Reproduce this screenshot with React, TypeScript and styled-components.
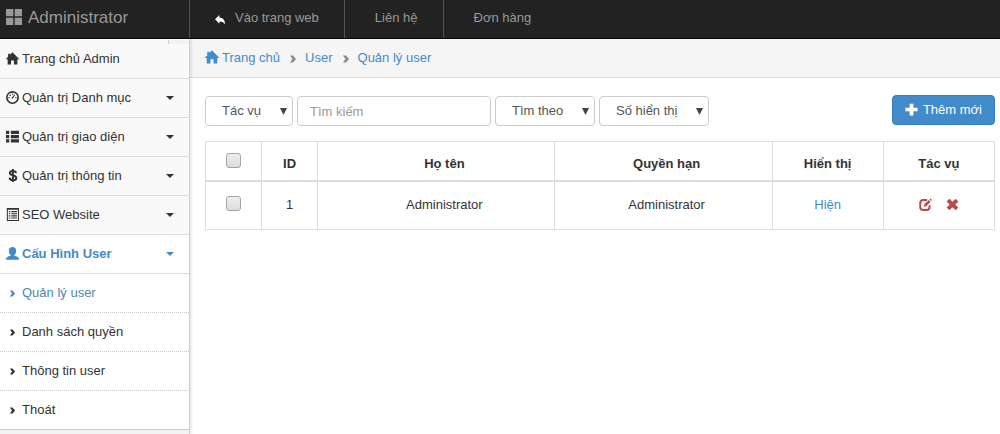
import React from "react";
import styled, { createGlobalStyle, css } from "styled-components";

const GlobalStyle = createGlobalStyle`
  *, *::before, *::after { box-sizing: border-box; }
  body {
    margin: 0;
    background: #fff;
    color: #333;
    font-family: "Liberation Sans", Arial, "Noto Sans", sans-serif;
    font-size: 13px;
    line-height: 20px;
  }
  a { color: inherit; text-decoration: none; }
  ul, ol { margin: 0; padding: 0; list-style: none; }
`;

const Page = styled.div`
  display: flex;
  flex-direction: column;
  min-height: 100vh;
`;

const TopBar = styled.header`
  display: flex;
  height: 39px;
  background: #222;
  border-bottom: 1px solid #080808;
  color: #999;
`;

const Brand = styled.a`
  display: flex;
  align-items: center;
  gap: 6px;
  width: 189px;
  padding-left: 6px;
  padding-bottom: 2px;
  font-size: 17px;
`;

const TopNav = styled.nav`
  display: flex;
`;

const TopLink = styled.a<{ $pad: string }>`
  display: flex;
  align-items: center;
  gap: 10px;
  padding: ${(p) => p.$pad};
  border-left: 1px solid #555;
`;

const ReplyMark = styled.span`
  margin-top: 4px;
  color: #fff;
`;

const Body = styled.div`
  display: flex;
  flex: 1;
`;

const Sidebar = styled.aside`
  position: relative;
  flex: none;
  width: 190px;
  background: #f3f3f3;
  border-top: 1px solid #fff;
  border-right: 1px solid #d0d0d0;
  box-shadow: 1px 0 3px rgba(0, 0, 0, 0.14);

  &::before {
    content: "";
    position: absolute;
    top: 0;
    right: 0;
    width: 21px;
    height: 4px;
    background: #f2f2f2;
    border-left: 1px solid #ccc;
  }
`;

const MenuLink = styled.a<{ $active?: boolean }>`
  display: flex;
  align-items: center;
  gap: 3px;
  height: 39px;
  padding: 0 15px 0 6px;
  background: #f9f9f9;
  border-bottom: 1px solid #ddd;
  ${(p) =>
    p.$active &&
    css`
      background: #fff;
      color: #428bca;
      font-weight: bold;
    `}
`;

const MenuText = styled.span`
  flex: 1;
`;

const Caret = styled.span`
  border-top: 4px solid currentColor;
  border-left: 4px solid transparent;
  border-right: 4px solid transparent;
`;

const SubMenu = styled.ul`
  background: #fff;
  border-bottom: 1px solid #ccc;

  li + li {
    border-top: 1px dotted #ccc;
  }
`;

const SubLink = styled.a<{ $active?: boolean }>`
  display: flex;
  align-items: center;
  gap: 6px;
  height: 38px;
  padding-left: 9px;
  color: ${(p) => (p.$active ? "#4b88b7" : "#333")};
`;

const Main = styled.main`
  flex: 1;
  min-width: 0;
`;

const Breadcrumb = styled.ol`
  display: flex;
  align-items: center;
  height: 39px;
  padding-left: 15px;
  background: #f5f5f5;
  border-bottom: 1px solid #ddd;
  color: #428bca;

  li {
    display: flex;
    align-items: center;
  }
  a {
    display: flex;
    align-items: center;
    gap: 3px;
  }
`;

const Separator = styled.span`
  display: flex;
  margin: 1px 8px 0 9px;
  color: #8c8c8c;
`;

const Content = styled.div`
  padding: 18px 5px 20px 15px;
`;

const Toolbar = styled.form`
  display: flex;
  gap: 4px;
  margin-bottom: 15px;
`;

const field = css`
  height: 30px;
  border: 1px solid #ccc;
  border-radius: 4px;
  background: #fff;
  color: #555;
  font: inherit;
`;

const SelectBox = styled.div<{ $width: number }>`
  position: relative;
  width: ${(p) => p.$width}px;
`;

const Select = styled.select`
  ${field}
  appearance: none;
  width: 100%;
  padding: 0 16px;
`;

const SelectArrow = styled.svg`
  position: absolute;
  top: 12px;
  right: 6px;
  pointer-events: none;
`;

const SearchInput = styled.input`
  ${field}
  width: 194px;
  padding: 0 12px;

  &::placeholder {
    color: #999;
    opacity: 1;
  }
`;

const AddButton = styled.button`
  display: flex;
  align-items: center;
  gap: 5px;
  height: 30px;
  margin: -1px 0 1px auto;
  padding: 0 12px;
  border: 1px solid #357ebd;
  border-radius: 4px;
  background: #428bca;
  color: #fff;
  font: inherit;
`;

const Table = styled.table`
  width: 100%;
  table-layout: fixed;
  border-collapse: collapse;
  text-align: center;

  th, td {
    padding: 0;
    border: 1px solid #ddd;
  }
  th {
    height: 39px;
    padding-top: 6px;
    border-bottom-width: 2px;
  }
  th:first-child {
    padding-top: 0;
  }
  td {
    height: 49px;
  }
  td:first-child {
    padding-bottom: 4px;
  }
  th:nth-child(3), td:nth-child(3) {
    padding-left: 17px;
  }
  th:nth-child(4), td:nth-child(4) {
    padding-left: 7px;
  }
`;

const Checkbox = styled.input`
  appearance: none;
  display: block;
  width: 15px;
  height: 15px;
  margin: 0 auto;
  border: 1px solid #a6a6a6;
  border-radius: 3px;
  background: linear-gradient(#eee, #dcdcdc);

  &:checked {
    background: #428bca;
  }
`;

const StateLink = styled.a`
  color: #428bca;
`;

const Actions = styled.div`
  display: flex;
  justify-content: center;
  gap: 14px;
`;

const IconButton = styled.button`
  display: flex;
  padding: 0;
  border: 0;
  background: none;
  color: #b94a48;
`;

const Svg = styled.svg<{ $raised: boolean }>`
  display: block;
  flex: none;
  margin-bottom: ${(p) => (p.$raised ? "2px" : "0")};
  fill: currentColor;
`;

type IconName =
  | "grid" | "reply" | "home" | "dashboard" | "list" | "dollar"
  | "listAlt" | "user" | "plus" | "edit" | "remove" | "chevron";

const shapes: Record<IconName, React.ReactNode> = {
  grid: <path d="M0 0h7.300v7.300H0zM8.700 0H16v7.300H8.700zM0 8.700h7.300V16H0zM8.700 8.700H16V16H8.700z" />,
  reply: <path d="M0 6.800 7 0v4c5.500.2 9 3.500 9 11-1.800-3.300-4-4.700-9-4.800v3.600z" />,
  home: <path d="M8 .3 16.400 9H14v6.500H9.800v-5H6.200v5H2V9H-.4L2.600 5.900V2h2.400v1.400z" />,
  dashboard: (
    <>
      <path fillRule="evenodd" d="M8 0a8 8 0 1 1 0 16A8 8 0 0 1 8 0zm0 2a6 6 0 1 0 0 12A6 6 0 0 0 8 2z" />
      <path d="m7 8.500 3.500-4.500.8.6-2.800 4.700a1 1 0 0 1-1.500-.8z" />
      <path d="M3 7.500h1.500V9H3zM4.500 4.500H6V6H4.500zM7.200 3h1.500v1.500H7.200zM11.500 7.500H13V9h-1.500z" />
    </>
  ),
  list: <path d="M0 1h4v4H0zM6 1h10v4H6zM0 6.200h4v4H0zM6 6.200h10v4H6zM0 11.400h4v4H0zM6 11.400h10v4H6z" />,
  dollar: (
    <path
      d="M12.300 5C12 3.200 10.500 2.500 8.500 2.500 6.300 2.500 4.700 3.400 4.700 5c0 4.200 8 1.800 8 6 0 1.900-1.800 2.800-4.200 2.800S4.500 12.700 4.300 10.700M8.500 0v16"
      fill="none"
      stroke="currentColor"
      strokeWidth="2.400"
    />
  ),
  listAlt: (
    <>
      <path fillRule="evenodd" d="M1 0h15v16H1zM2.300 2.200v12.500h12.400V2.200z" />
      <path d="M3.500 3.800h1.800v1.400H3.500zM6.500 3.800h7v1.400h-7zM3.500 6.400h1.800v1.400H3.500zM6.500 6.400h7v1.400h-7zM3.500 9h1.800v1.400H3.500zM6.500 9h7v1.400h-7zM3.500 11.600h1.800V13H3.500zM6.500 11.600h7V13h-7z" />
    </>
  ),
  user: <path d="M8 0c3 0 4.500 1.900 4.500 4.800 0 2.200-.8 4-2.200 5v1.100c3.700.9 5.900 2 5.900 4.900H-.2c0-2.900 2.200-4 5.900-4.900V9.800c-1.400-1-2.200-2.800-2.200-5C3.500 1.900 5 0 8 0z" />,
  plus: <path d="M5.700 1h4.600v4.700H15.500v4.600h-5.200V15.500H5.700v-5.200H.5V5.700h5.200z" />,
  edit: (
    <>
      <path
        d="M10 2.500H5.500A3.800 3.800 0 0 0 1.500 6v5a3.800 3.800 0 0 0 3.800 3.800h4A3.800 3.800 0 0 0 13 11V9"
        fill="none"
        stroke="currentColor"
        strokeWidth="2.400"
      />
      <path d="m6 10.800.7-3L12 2.500l2.200 2.200L9 10zM13 1.500l1-1L16 2.600l-1 1z" />
    </>
  ),
  remove: <path d="m.8 4.200 3.300-3.200L8 4.700 11.900 1l3.300 3.200L11.500 8l3.700 3.800-3.300 3.200L8 11.300 4.100 15 .8 11.800 4.500 8z" />,
  chevron: <path d="M2 1h6l6 7-6 7H2l5-7z" />,
};

function Icon({ name, size = 13 }: { name: IconName; size?: number }) {
  return (
    <Svg
      width={size}
      height={size}
      viewBox="0 0 16 16"
      overflow="visible"
      aria-hidden="true"
      $raised={size > 12}
    >
      {shapes[name]}
    </Svg>
  );
}

function Dropdown({ label, width }: { label: string; width: number }) {
  return (
    <SelectBox $width={width}>
      <Select aria-label={label}>
        <option>{label}</option>
      </Select>
      <SelectArrow width="7" height="7" viewBox="0 0 7 7" fill="#444" aria-hidden="true">
        <path d="M0 0h7L3.500 7z" />
      </SelectArrow>
    </SelectBox>
  );
}

const menu: { icon: IconName; text: string; caret: boolean; active?: boolean }[] = [
  { icon: "home", text: "Trang chủ Admin", caret: false },
  { icon: "dashboard", text: "Quản trị Danh mục", caret: true },
  { icon: "list", text: "Quản trị giao diện", caret: true },
  { icon: "dollar", text: "Quản trị thông tin", caret: true },
  { icon: "listAlt", text: "SEO Website", caret: true },
  { icon: "user", text: "Cấu Hình User", caret: true, active: true },
];

const subMenu = ["Quản lý user", "Danh sách quyền", "Thông tin user", "Thoát"];
const crumbs = ["Trang chủ", "User", "Quản lý user"];

export default function App() {
  return (
    <Page>
      <GlobalStyle />
      <TopBar>
        <Brand href="#">
          <Icon name="grid" size={16} />
          Administrator
        </Brand>
        <TopNav>
          <TopLink href="#" $pad="0 25px 3px">
            <ReplyMark>
              <Icon name="reply" size={10} />
            </ReplyMark>
            Vào trang web
          </TopLink>
          <TopLink href="#" $pad="0 25px 3px 30px">Liên hệ</TopLink>
          <TopLink href="#" $pad="0 30px 3px">Đơn hàng</TopLink>
        </TopNav>
      </TopBar>
      <Body>
        <Sidebar>
          <nav>
            {menu.map((m) => (
              <MenuLink key={m.text} href="#" $active={m.active}>
                <Icon name={m.icon} />
                <MenuText>{m.text}</MenuText>
                {m.caret && <Caret />}
              </MenuLink>
            ))}
            <SubMenu>
              {subMenu.map((text, i) => (
                <li key={text}>
                  <SubLink href="#" $active={i === 0}>
                    <Icon name="chevron" size={7} />
                    {text}
                  </SubLink>
                </li>
              ))}
            </SubMenu>
          </nav>
        </Sidebar>
        <Main>
          <Breadcrumb>
            {crumbs.map((text, i) => (
              <li key={text}>
                {i > 0 && (
                  <Separator>
                    <Icon name="chevron" size={8} />
                  </Separator>
                )}
                <a href="#">
                  {i === 0 && <Icon name="home" size={14} />}
                  {text}
                </a>
              </li>
            ))}
          </Breadcrumb>
          <Content>
            <Toolbar onSubmit={(e) => e.preventDefault()}>
              <Dropdown label="Tác vụ" width={88} />
              <SearchInput type="text" placeholder="Tìm kiếm" aria-label="Tìm kiếm" />
              <Dropdown label="Tìm theo" width={100} />
              <Dropdown label="Số hiển thị" width={110} />
              <AddButton type="button">
                <Icon name="plus" />
                Thêm mới
              </AddButton>
            </Toolbar>
            <Table>
              <colgroup>
                <col style={{ width: "7.1%" }} />
                <col style={{ width: "7.1%" }} />
                <col style={{ width: "30%" }} />
                <col />
                <col style={{ width: "14.1%" }} />
                <col style={{ width: "14.1%" }} />
              </colgroup>
              <thead>
                <tr>
                  <th scope="col">
                    <Checkbox type="checkbox" aria-label="Chọn tất cả" />
                  </th>
                  <th scope="col">ID</th>
                  <th scope="col">Họ tên</th>
                  <th scope="col">Quyền hạn</th>
                  <th scope="col">Hiển thị</th>
                  <th scope="col">Tác vụ</th>
                </tr>
              </thead>
              <tbody>
                <tr>
                  <td>
                    <Checkbox type="checkbox" aria-label="Chọn user 1" />
                  </td>
                  <td>1</td>
                  <td>Administrator</td>
                  <td>Administrator</td>
                  <td>
                    <StateLink href="#">Hiện</StateLink>
                  </td>
                  <td>
                    <Actions>
                      <IconButton type="button" aria-label="Sửa">
                        <Icon name="edit" />
                      </IconButton>
                      <IconButton type="button" aria-label="Xóa">
                        <Icon name="remove" />
                      </IconButton>
                    </Actions>
                  </td>
                </tr>
              </tbody>
            </Table>
          </Content>
        </Main>
      </Body>
    </Page>
  );
}
